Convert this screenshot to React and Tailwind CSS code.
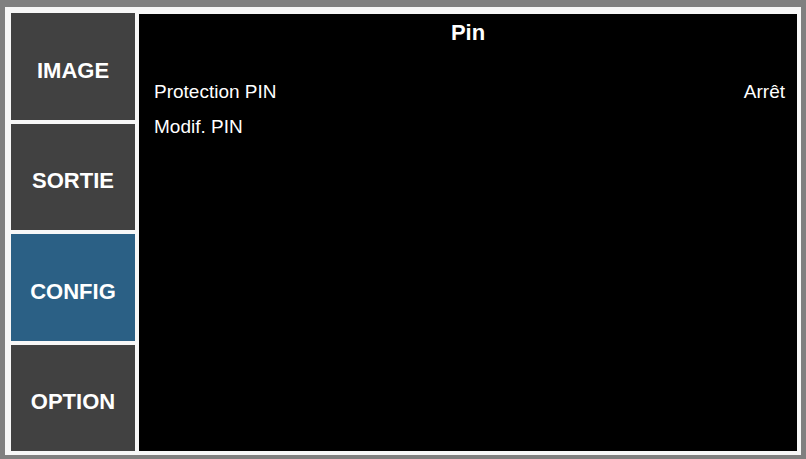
import React from 'react';

const tabs = [
  { id: 'image', label: 'IMAGE' },
  { id: 'sortie', label: 'SORTIE' },
  { id: 'config', label: 'CONFIG' },
  { id: 'option', label: 'OPTION' },
];

const rows = [
  { label: 'Protection PIN', value: 'Arrêt' },
  { label: 'Modif. PIN', value: '' },
];

function App() {
  const active = 'config';

  return (
    <div className="w-[806px] h-[459px] bg-[#808080] pl-[5px] pt-[7px] pr-[5px] pb-[4px] font-['Liberation_Sans',Arial,sans-serif]">
      <div className="flex h-full bg-[#f7f7f7] pl-[6px] pt-[6px] pr-[4px] pb-[4px] gap-[4px]">
        <div className="flex flex-col w-[124px] gap-[4px]">
          {tabs.map((tab) => (
            <div
              key={tab.id}
              className={`flex-1 flex items-center justify-center pt-[8px] text-[22px] font-bold text-white ${
                tab.id === active ? 'bg-[#2b6085]' : 'bg-[#414141]'
              }`}
            >
              {tab.label}
            </div>
          ))}
        </div>
        <div className="flex-1 bg-black text-white mt-[1px]">
          <div className="text-center text-[22px] font-bold leading-none pt-[8px]">Pin</div>
          <div className="pt-[38px] pl-[15px] pr-[12px]">
            {rows.map((row) => (
              <div key={row.label} className="flex justify-between h-[35px] text-[19px] leading-none">
                <span>{row.label}</span>
                <span>{row.value}</span>
              </div>
            ))}
          </div>
        </div>
      </div>
    </div>
  );
}

export default App;
